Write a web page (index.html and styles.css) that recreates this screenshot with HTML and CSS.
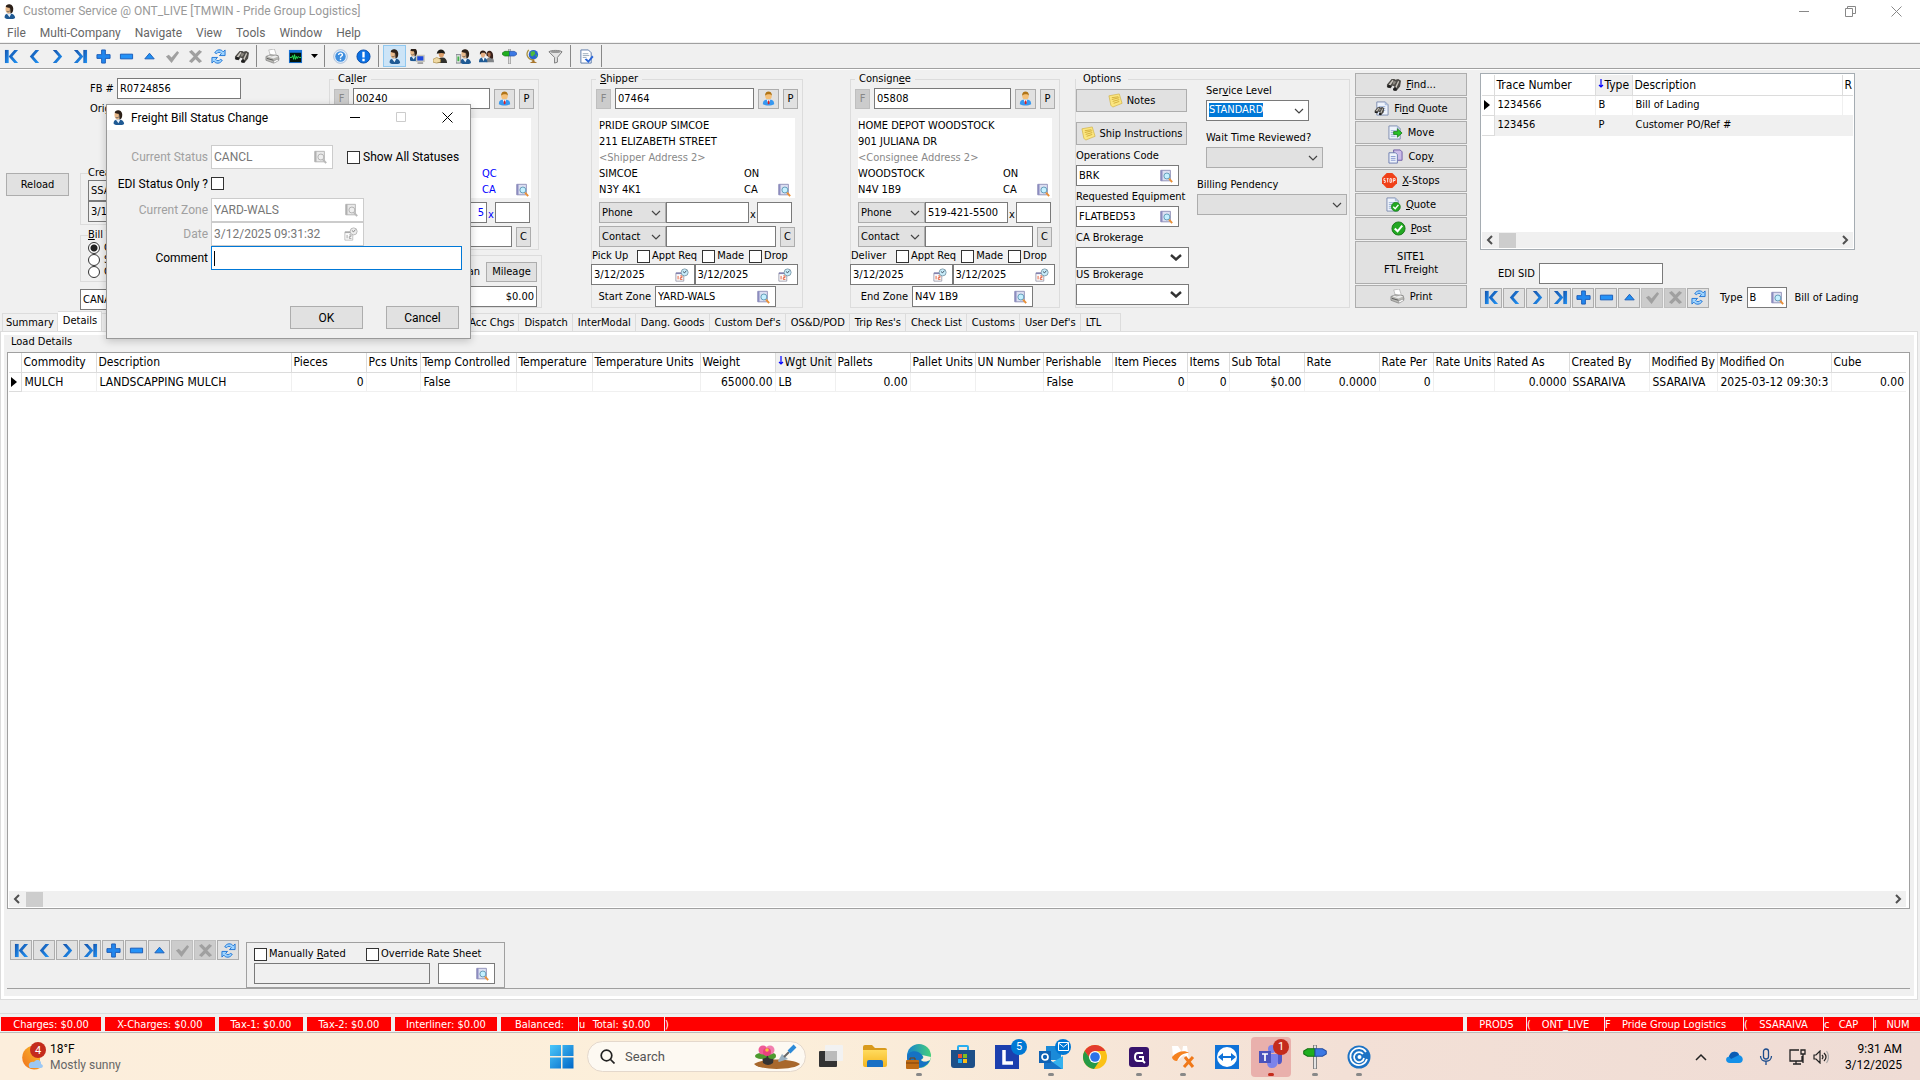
FILE: index.html
```html
<!DOCTYPE html>
<html lang="en">
<head>
  <meta charset="UTF-8">
  <meta name="viewport" content="width=device-width, initial-scale=1.0">
  <title>Customer Service</title>
  <link rel="stylesheet" href="styles.css">
</head>
<body>

  <!-- icons -->
  <svg class="sprite" aria-hidden="true">
    <defs>
      <linearGradient id="blue" x1="0" y1="0" x2="1" y2="1"><stop offset="0" stop-color="#1450a8"/><stop offset="1" stop-color="#2196f8"/></linearGradient>
      <linearGradient id="win" x1="0" y1="0" x2="1" y2="1"><stop offset="0" stop-color="#4cc8fa"/><stop offset="1" stop-color="#0067c8"/></linearGradient>
      <linearGradient id="edge" x1="0" y1="0" x2="1" y2="0"><stop offset="0" stop-color="#1481d0"/><stop offset="1" stop-color="#46d07a"/></linearGradient>
      <linearGradient id="sun" x1="1" y1="0" x2="0" y2="1"><stop offset="0" stop-color="#fbc02d"/><stop offset="1" stop-color="#f0701c"/></linearGradient>
      <linearGradient id="folder" x1="0" y1="0" x2="0" y2="1"><stop offset="0" stop-color="#ffdb5e"/><stop offset="1" stop-color="#f5b51e"/></linearGradient>
    </defs>
    <symbol id="first" viewBox="0 0 16 16"><path d="M1 1h4v14H1z" fill="url(#blue)"/><path d="M11 1h4l-6 7 6 7h-4L5 8z" fill="url(#blue)"/></symbol>
    <symbol id="prev" viewBox="0 0 16 16"><path d="M9 1h4L7 8l6 7H9L3 8z" fill="url(#blue)"/></symbol>
    <symbol id="next" viewBox="0 0 16 16"><path d="M7 1H3l6 7-6 7h4l6-7z" fill="url(#blue)"/></symbol>
    <symbol id="last" viewBox="0 0 16 16"><path d="M11 1h4v14h-4z" fill="url(#blue)"/><path d="M5 1H1l6 7-6 7h4l6-7z" fill="url(#blue)"/></symbol>
    <symbol id="plus" viewBox="0 0 16 16"><path d="M6 1h4v5h5v4h-5v5H6v-5H1V6h5z" fill="#2287ee" stroke="#1a5cb8"/></symbol>
    <symbol id="minus" viewBox="0 0 16 16"><path d="M1.5 5.5h13v5h-13z" fill="#2492f8" stroke="#1a5cb8"/></symbol>
    <symbol id="up" viewBox="0 0 16 16"><path d="M8 4.5l5 6H3z" fill="#2090f4" stroke="#1a5cb8"/></symbol>
    <symbol id="tick" viewBox="0 0 16 16"><path d="M1 8l3-2 3 3 6-7 2 2-8 11z" fill="#a0a0a0"/></symbol>
    <symbol id="cross" viewBox="0 0 16 16"><path d="M1 3l3-2 4 4 4-4 3 2-5 5 5 5-3 2-4-4-4 4-3-2 5-5z" fill="#a0a0a0"/></symbol>
    <symbol id="refresh" viewBox="0 0 16 16"><path d="M4 4C6 0 11 0 13 3l2-2v6H9l2-2C10 3 7 3 6 5zM12 12c-2 4-7 4-9 1l-2 2V9h6l-2 2c1 2 4 2 5 0z" fill="#9ed4ff" stroke="#1f74d4"/></symbol>
    <symbol id="binoc" viewBox="0 0 16 16"><path d="M1 8l5-6 3 0 1 1 3-1 3 2-1 6-4 5-3-1 1-4-2-1-2 3-4-1z" fill="#4c4a46"/><path d="M3 8l4-5 1 1-4 6zM10 10l3-6 1 1-3 7z" fill="#c8c4bc"/><path d="M8 4l3 1-2 3-2 0z" fill="#8c8880"/><ellipse cx="3.5" cy="10" rx="2" ry="1.5" fill="#1e1e1e"/><ellipse cx="9.5" cy="13" rx="2" ry="1.7" fill="#1e1e1e"/></symbol>
    <symbol id="printer" viewBox="0 0 16 16"><path d="M4 1l6-1 2 6-6 2z" fill="#fff" stroke="#aaa" stroke-width=".7"/><path d="M1 8l5-2 8 1 1 4-6 4-8-3z" fill="#b8b8b4" stroke="#777" stroke-width=".7"/><path d="M3 8l6 2 5-2-3-1-4 1-3-1z" fill="#ececec"/><path d="M9 13l4-2 2 1-5 3z" fill="#fff" stroke="#888" stroke-width=".6"/><path d="M2 10l7 2" stroke="#555"/></symbol>
    <symbol id="scope" viewBox="0 0 16 16"><rect x="1" y="1" width="14" height="14" fill="#1a74d8"/><rect x="2" y="4" width="12" height="10" fill="#03140a"/><path d="M2 9h2l1-2 1 4 1-5 1 5 1-3 1 2 1-2 1 1h2" stroke="#2cf060" fill="none"/></symbol>
    <symbol id="help" viewBox="0 0 16 16"><circle cx="8" cy="8" r="7.3" fill="#e4eefa" stroke="#8ca8cc" stroke-width=".7"/><circle cx="8" cy="8" r="5.6" fill="#3f8ede"/><path d="M6 6.5c0-3 4.5-2.5 4 0-.2 1-2 1.200-2 2.700M8 10.500v1.500" stroke="#fff" stroke-width="1.5" fill="none"/></symbol>
    <symbol id="info" viewBox="0 0 16 16"><circle cx="8" cy="8" r="7" fill="#0a70e4" stroke="#0a4eaa"/><path d="M8 3v6M8 10.500V13" stroke="#fff" stroke-width="2.500"/></symbol>
    <symbol id="agent" viewBox="0 0 16 16"><path d="M3 15c-1-4 2-5 5-5 4 0 6 2 6 5-3 2-8 2-11 0z" fill="#1f5a94"/><path d="M5 10l3 4 2-4z" fill="#e8f0f8"/><path d="M4 3c1-2 6-2 6 2 0 3-1 5-3 5S3 8 4 3z" fill="#e9b98a"/><path d="M4 3c0-4 8-4 8 2 0 3-1 5-3 5 0-3 0-4-1-6-1 0-3 0-4-1z" fill="#2c2018"/><path d="M9 5c0 3-2 4-4 3" stroke="#555" stroke-width=".8" fill="none"/></symbol>
    <symbol id="agentpc" viewBox="0 0 16 16"><use href="#agent" x="-3" y="-1" width="14" height="14"/><path d="M7 7h8v6H7z" fill="#1d49e0" stroke="#c6c6bc" stroke-width="1.5"/><path d="M8 15h6" stroke="#888" stroke-width="1.500"/></symbol>
    <symbol id="driver" viewBox="0 0 16 16"><path d="M4 15c0-4 3-6 6-6s5 2 5 6z" fill="#30302c"/><path d="M6 4h6c0 3-1 5-3 5S6 8 6 4z" fill="#dca06c"/><path d="M4 5c1-6 8-6 9 0-3-1-5-1-9 0z" fill="#1c1b18"/><path d="M0 11l4-2 4 2v3l-4 1-4-1z" fill="#efd9a4" stroke="#a88840" stroke-width=".7"/></symbol>
    <symbol id="agentbar" viewBox="0 0 16 16"><use href="#agent" x="2"/><path d="M0 6h5v9H0z" fill="#dfe6df" stroke="#667" stroke-width=".8"/><path d="M1.500 8h2v5h-2z" fill="#44b04c"/></symbol>
    <symbol id="people" viewBox="0 0 16 16"><path d="M8 14c0-4 1-5 4-5s4 2 4 5z" fill="#808488"/><path d="M8 7c-1-7 7-7 7 0v3h-2z" fill="#38201a"/><path d="M9 4h3c1 3 0 5-2 5z" fill="#a86c48"/><path d="M0 14c0-4 2-5 4-5s5 1 5 5z" fill="#1f5a94"/><path d="M3 9l2 4 1-4z" fill="#fff"/><path d="M2 4h5c0 3-1 5-3 5S2 7 2 4z" fill="#e6b084"/><path d="M1 6c-1-6 7-6 7 0L6 4H3z" fill="#2c180e"/></symbol>
    <symbol id="sign" viewBox="0 0 16 16"><path d="M7 0h2v16H7z" fill="#e4e4e4" stroke="#777" stroke-width=".6"/><path d="M3 2.500h5v5H3L.5 6V4z" fill="#1fae1f" stroke="#137013" stroke-width=".7"/><path d="M8 2.500h5L15.500 4v2L13 7.500H8z" fill="#3c78e4" stroke="#264fa0" stroke-width=".7"/></symbol>
    <symbol id="globe" viewBox="0 0 16 16"><path d="M4 1c-4 5-1 10 5 11" stroke="#a89040" stroke-width="1.400" fill="none"/><circle cx="9" cy="6" r="5" fill="#2864d0"/><path d="M6 3l4-1 1 3-3 3-2-1zM11 6l2 0-1 3z" fill="#4cba3c"/><path d="M8 11h2v2l3 2H5l3-2z" fill="#a8762c"/></symbol>
    <symbol id="funnel" viewBox="0 0 16 16"><path d="M1 3c2-2 12-2 14 0L10 9v5l-3 1V9z" fill="#e4e4e4" stroke="#777"/><ellipse cx="8" cy="3" rx="5.5" ry="1.300" fill="#999"/></symbol>
    <symbol id="doccheck" viewBox="0 0 16 16"><path d="M2 1h8l3 3v11H2z" fill="#fff" stroke="#5a78a8"/><path d="M4 5h6M4 7h7M4 9h4" stroke="#9ab"/><path d="M6 11l2-1 2 2 4-5 1.500 1.500L10 15z" fill="#2a66d8"/></symbol>
    <symbol id="lookup" viewBox="0 0 16 16"><path d="M2 1.500h11v12H2z" fill="#dcdff2" stroke="#8c8cb4"/><path d="M2 1.500h2v12H2z" fill="#8c8cc0"/><circle cx="9" cy="8" r="3.400" fill="#c4f0ff" stroke="#5a94b0"/><path d="M11.500 11l3.500 4" stroke="#e89038" stroke-width="2.200"/></symbol>
    <symbol id="when" viewBox="0 0 16 16"><path d="M1 6h9v9H1z" fill="#fff" stroke="#99a"/><path d="M1 5h9v2H1z" fill="#8484b0"/><path d="M3.500 9v4M6 9h2v2H6v2h2.500" stroke="#e0502c" fill="none"/><circle cx="11" cy="5" r="4" fill="#c8ecfa" stroke="#7c98a8"/><path d="M9 4l2 1.500L13 3" stroke="#345" fill="none"/></symbol>
    <symbol id="person" viewBox="0 0 16 16"><path d="M2 14c0-4 2-5 6-5s6 1 6 5c-3 2-9 2-12 0z" fill="#3698f0"/><path d="M6 9h4l-2 5z" fill="#fff"/><path d="M7.500 10h1.200l.6 3-1.300 1.500L7 13z" fill="#e02020"/><circle cx="8" cy="5.500" r="3.400" fill="#f5c078"/><path d="M4.500 5c-1-6 8-6 7 0-1-2-5-2-7 0z" fill="#b07416"/></symbol>
    <symbol id="note" viewBox="0 0 16 16"><path d="M1 3l11-2 3 10-10 4-2-2z" fill="#fbe680" stroke="#d0b040" stroke-width=".7"/><path d="M4 5l7-1M4 7l8-2M5 9l7-2M6 11l6-2" stroke="#c8a028" stroke-width=".8"/></symbol>
    <symbol id="doc" viewBox="0 0 16 16"><path d="M2 1h9l3 3v11H2z" fill="#eef3fb" stroke="#7c8cb0"/><path d="M11 1v3h3M4 6h7M4 8h7M4 10h7M4 12h5" fill="none" stroke="#9ab0d4"/></symbol>
    <symbol id="docfind" viewBox="0 0 16 16"><use href="#doc" x="1"/><use href="#binoc" x="0" y="5" width="11" height="11"/></symbol>
    <symbol id="move" viewBox="0 0 16 16"><use href="#doc" x="-1"/><path d="M6 7h4V4l5 4.500L10 13v-3H6z" fill="#28c428" stroke="#147414" stroke-width=".8"/></symbol>
    <symbol id="copy" viewBox="0 0 16 16"><path d="M6 1h7l2 2v9H6z" fill="#cbbce8" stroke="#6c5ca4"/><path d="M1 4h7l2 2v9H1z" fill="#eef3fb" stroke="#6c7cb0"/><path d="M3 8h5M3 10h5M3 12h5" stroke="#8898d0"/></symbol>
    <symbol id="ok" viewBox="0 0 16 16"><circle cx="8" cy="8" r="7" fill="#22a822" stroke="#187818"/><path d="M4 8l3 3 5-6" stroke="#fff" stroke-width="2.200" fill="none"/></symbol>
    <symbol id="quote" viewBox="0 0 16 16"><use href="#doc" x="-1"/><use href="#ok" x="5" y="5" width="11" height="11"/></symbol>
    <symbol id="stop" viewBox="0 0 16 16"><path d="M5 0h6l5 5v6l-5 5H5l-5-5V5z" fill="#f04018"/><path d="M3.500 6H2v2h1.500v2H2M5 6h2M6 6v4M8.500 6h1.500v4H8.500zM12 10V6h2v2h-2" stroke="#fff" stroke-width=".9" fill="none"/></symbol>
    <symbol id="chev" viewBox="0 0 10 6"><path d="M1 1l4 4 4-4" stroke="#444" stroke-width="1.200" fill="none"/></symbol>
    <symbol id="chevbold" viewBox="0 0 12 7"><path d="M1 1l5 4.500L11 1" stroke="#333" stroke-width="2.400" fill="none"/></symbol>
    <symbol id="sleft" viewBox="0 0 8 10"><path d="M6 1L2 5l4 4" stroke="#505050" stroke-width="2" fill="none"/></symbol>
    <symbol id="sright" viewBox="0 0 8 10"><path d="M2 1l4 4-4 4" stroke="#505050" stroke-width="2" fill="none"/></symbol>
    <symbol id="sort" viewBox="0 0 6 10"><path d="M3 0v8M1 6l2 2 2-2" stroke="#00f" stroke-width="1.200" fill="none"/></symbol>
  </svg>

  <div class="window">

    <header class="titlebar">
      <svg class="ic"><use href="#agent"/></svg>
      <span class="title">Customer Service @ ONT_LIVE [TMWIN - Pride Group Logistics]</span>
      <button class="winbtn" aria-label="Minimize"><svg width="10" height="10"><path d="M0 5.500h10" stroke="#888"/></svg></button>
      <button class="winbtn" aria-label="Restore"><svg width="11" height="11" fill="none" stroke="#888"><path d="M.5 2.500h7v8h-7zM2.500 2.500v-2h8v7h-3"/></svg></button>
      <button class="winbtn" aria-label="Close"><svg width="11" height="11"><path d="M.5.5l10 10M10.500.5l-10 10" stroke="#888"/></svg></button>
    </header>

    <nav class="menu">
      <a href="#">File</a><a href="#">Multi-Company</a><a href="#">Navigate</a><a href="#">View</a><a href="#">Tools</a><a href="#">Window</a><a href="#">Help</a>
    </nav>

    <div class="toolbar">
      <button aria-label="First"><svg class="ic"><use href="#first"/></svg></button>
      <button aria-label="Previous"><svg class="ic"><use href="#prev"/></svg></button>
      <button aria-label="Next"><svg class="ic"><use href="#next"/></svg></button>
      <button aria-label="Last"><svg class="ic"><use href="#last"/></svg></button>
      <button aria-label="Insert"><svg class="ic"><use href="#plus"/></svg></button>
      <button aria-label="Delete"><svg class="ic"><use href="#minus"/></svg></button>
      <button aria-label="Edit"><svg class="ic"><use href="#up"/></svg></button>
      <button aria-label="Save" disabled><svg class="ic"><use href="#tick"/></svg></button>
      <button aria-label="Cancel" disabled><svg class="ic"><use href="#cross"/></svg></button>
      <button aria-label="Refresh"><svg class="ic"><use href="#refresh"/></svg></button>
      <button aria-label="Find"><svg class="ic"><use href="#binoc"/></svg></button>
      <i class="sep"></i>
      <button aria-label="Print"><svg class="ic"><use href="#printer"/></svg></button>
      <button aria-label="Monitor"><svg class="ic"><use href="#scope"/></svg></button>
      <button class="narrow" aria-label="More"><svg width="7" height="4"><path d="M0 0h7L3.500 4z"/></svg></button>
      <i class="sep"></i>
      <button aria-label="Help"><svg class="ic"><use href="#help"/></svg></button>
      <button aria-label="About"><svg class="ic"><use href="#info"/></svg></button>
      <i class="sep"></i>
      <button class="on" aria-label="Customer service"><svg class="ic"><use href="#agent"/></svg></button>
      <button aria-label="Dispatch"><svg class="ic"><use href="#agentpc"/></svg></button>
      <button aria-label="Drivers"><svg class="ic"><use href="#driver"/></svg></button>
      <button aria-label="Billing"><svg class="ic"><use href="#agentbar"/></svg></button>
      <button aria-label="Clients"><svg class="ic"><use href="#people"/></svg></button>
      <button aria-label="Routes"><svg class="ic"><use href="#sign"/></svg></button>
      <button aria-label="Map"><svg class="ic"><use href="#globe"/></svg></button>
      <button aria-label="Filter"><svg class="ic"><use href="#funnel"/></svg></button>
      <i class="sep"></i>
      <button aria-label="Report"><svg class="ic"><use href="#doccheck"/></svg></button>
      <i class="sep"></i>
    </div>

    <section class="top">
      <div class="reload-col"><button class="btn reload">Reload</button></div>

      <div class="bill-col">
        <div class="row fb"><label for="fb">FB #</label><input id="fb" class="box w124" value="R0724856"></div>
        <div class="orig">Original</div>
        <fieldset class="created">
          <legend>Created</legend>
          <input class="box flat" value="SSARAIVA" aria-label="Created by" readonly>
          <input class="box flat" value="3/12/2025" aria-label="Created on" readonly>
        </fieldset>
        <fieldset class="billtype">
          <legend><u>B</u>ill Type</legend>
          <label><input type="radio" name="bt" checked> Customer</label>
          <label><input type="radio" name="bt"> Split</label>
          <label><input type="radio" name="bt"> Other</label>
        </fieldset>
        <input class="box w124" value="CANADIAN" aria-label="Currency">
      </div>

      <div class="caller-col">
        <fieldset class="party">
          <legend>Ca<u>l</u>ler</legend>
          <div class="row">
            <button class="btn sq" disabled>F</button><input class="box grow" value="00240" aria-label="Caller code"><button class="btn pic" aria-label="Caller contact"><svg class="ic"><use href="#person"/></svg></button><button class="btn sq">P</button>
          </div>
          <div class="addr blue">
            <p>&nbsp;</p><p>&nbsp;</p><p>&nbsp;</p>
            <p><span></span><span>QC</span></p>
            <p><span></span><span>CA</span><svg class="ic sm"><use href="#lookup"/></svg></p>
          </div>
          <div class="row line blue">
            <span class="combo w67"><select aria-label="Caller phone type"><option>Phone</option></select><svg><use href="#chev"/></svg></span><input class="box w83 right" value="5" aria-label="Caller phone"><span class="ext">x</span><input class="box w35" aria-label="Caller extension">
          </div>
          <div class="row line">
            <span class="combo w67"><select aria-label="Caller contact type"><option>Contact</option></select><svg><use href="#chev"/></svg></span><input class="box grow" aria-label="Caller contact name"><button class="btn sq">C</button>
          </div>
        </fieldset>
        <fieldset class="miles">
          <div class="row"><span>Plan</span><button class="btn mileage">Mileage</button></div>
          <input class="box right" value="$0.00" aria-label="Amount">
        </fieldset>
      </div>

      <fieldset class="party shipper">
        <legend><u>S</u>hipper</legend>
        <div class="row">
          <button class="btn sq" disabled>F</button><input class="box grow" value="07464" aria-label="Shipper code"><button class="btn pic" aria-label="Shipper contact"><svg class="ic"><use href="#person"/></svg></button><button class="btn sq">P</button>
        </div>
        <div class="addr">
          <p>PRIDE GROUP SIMCOE</p>
          <p>211 ELIZABETH STREET</p>
          <p class="dim">&lt;Shipper Address 2&gt;</p>
          <p><span>SIMCOE</span><span>ON</span></p>
          <p><span>N3Y 4K1</span><span>CA</span><svg class="ic sm"><use href="#lookup"/></svg></p>
        </div>
        <div class="row line">
          <span class="combo w67"><select aria-label="Shipper phone type"><option>Phone</option></select><svg><use href="#chev"/></svg></span><input class="box w83" aria-label="Shipper phone"><span class="ext">x</span><input class="box w35" aria-label="Shipper extension">
        </div>
        <div class="row line">
          <span class="combo w67"><select aria-label="Shipper contact type"><option>Contact</option></select><svg><use href="#chev"/></svg></span><input class="box grow" aria-label="Shipper contact name"><button class="btn sq">C</button>
        </div>
        <div class="row flags">
          <span>Pick Up</span>
          <label><input type="checkbox">Appt Req</label><label><input type="checkbox">Made</label><label><input type="checkbox">Drop</label>
        </div>
        <div class="row dates">
          <span class="field grow"><input value="3/12/2025" aria-label="Pick up from"><svg class="ic sm"><use href="#when"/></svg></span><span class="field grow"><input value="3/12/2025" aria-label="Pick up to"><svg class="ic sm"><use href="#when"/></svg></span>
        </div>
        <div class="row zone"><label for="sz">Start Zone</label><span class="field w121"><input id="sz" value="YARD-WALS"><svg class="ic sm"><use href="#lookup"/></svg></span></div>
      </fieldset>

      <fieldset class="party consignee">
        <legend>Consign<u>e</u>e</legend>
        <div class="row">
          <button class="btn sq" disabled>F</button><input class="box grow" value="05808" aria-label="Consignee code"><button class="btn pic" aria-label="Consignee contact"><svg class="ic"><use href="#person"/></svg></button><button class="btn sq">P</button>
        </div>
        <div class="addr">
          <p>HOME DEPOT WOODSTOCK</p>
          <p>901 JULIANA DR</p>
          <p class="dim">&lt;Consignee Address 2&gt;</p>
          <p><span>WOODSTOCK</span><span>ON</span></p>
          <p><span>N4V 1B9</span><span>CA</span><svg class="ic sm"><use href="#lookup"/></svg></p>
        </div>
        <div class="row line">
          <span class="combo w67"><select aria-label="Consignee phone type"><option>Phone</option></select><svg><use href="#chev"/></svg></span><input class="box w83" value="519-421-5500" aria-label="Consignee phone"><span class="ext">x</span><input class="box w35" aria-label="Consignee extension">
        </div>
        <div class="row line">
          <span class="combo w67"><select aria-label="Consignee contact type"><option>Contact</option></select><svg><use href="#chev"/></svg></span><input class="box grow" aria-label="Consignee contact name"><button class="btn sq">C</button>
        </div>
        <div class="row flags">
          <span>Deliver</span>
          <label><input type="checkbox">Appt Req</label><label><input type="checkbox">Made</label><label><input type="checkbox">Drop</label>
        </div>
        <div class="row dates">
          <span class="field grow"><input value="3/12/2025" aria-label="Deliver from"><svg class="ic sm"><use href="#when"/></svg></span><span class="field grow"><input value="3/12/2025" aria-label="Deliver to"><svg class="ic sm"><use href="#when"/></svg></span>
        </div>
        <div class="row zone"><label for="ez">End Zone</label><span class="field w121"><input id="ez" value="N4V 1B9"><svg class="ic sm"><use href="#lookup"/></svg></span></div>
      </fieldset>

      <fieldset class="options">
        <legend>Options</legend>
        <div class="cols">
          <div class="opt-left">
            <button class="btn wide"><svg class="ic"><use href="#note"/></svg>Notes</button>
            <button class="btn wide second"><svg class="ic"><use href="#note"/></svg>Ship Instructions</button>
            <label for="oc">Operations Code</label>
            <span class="field w103"><input id="oc" value="BRK"><svg class="ic sm"><use href="#lookup"/></svg></span>
            <label for="re">Requested Equipment</label>
            <span class="field w103"><input id="re" value="FLATBED53"><svg class="ic sm"><use href="#lookup"/></svg></span>
            <label for="cab">CA Brokerage</label>
            <span class="combo white bold"><select id="cab"><option></option></select><svg><use href="#chevbold"/></svg></span>
            <label for="usb">US Brokerage</label>
            <span class="combo white bold"><select id="usb"><option></option></select><svg><use href="#chevbold"/></svg></span>
          </div>
          <div class="opt-right">
            <div class="opt ind">
              <label for="sl">Ser<u>v</u>ice Level</label>
              <span class="combo white w103"><span class="picked">STANDARD</span><select id="sl"><option></option></select><svg><use href="#chev"/></svg></span>
            </div>
            <div class="opt ind">
              <label for="wt">Wait Time Reviewed?</label>
              <span class="combo w117"><select id="wt"><option></option></select><svg><use href="#chev"/></svg></span>
            </div>
            <div class="opt">
              <label for="bp">Billing Pendency</label>
              <span class="combo"><select id="bp"><option></option></select><svg><use href="#chev"/></svg></span>
            </div>
          </div>
        </div>
      </fieldset>

      <div class="actions">
        <button class="btn"><svg class="ic"><use href="#binoc"/></svg><span><u>F</u>ind...</span></button>
        <button class="btn"><svg class="ic"><use href="#docfind"/></svg><span>Fi<u>n</u>d Quote</span></button>
        <button class="btn"><svg class="ic"><use href="#move"/></svg><span>Move</span></button>
        <button class="btn"><svg class="ic"><use href="#copy"/></svg><span>Cop<u>y</u></span></button>
        <button class="btn"><svg class="ic"><use href="#stop"/></svg><span><u>X</u>-Stops</span></button>
        <button class="btn"><svg class="ic"><use href="#quote"/></svg><span><u>Q</u>uote</span></button>
        <button class="btn"><svg class="ic"><use href="#ok"/></svg><span><u>P</u>ost</span></button>
        <button class="btn site">SITE1<br>FTL Freight</button>
        <button class="btn"><svg class="ic"><use href="#printer"/></svg><span>Print</span></button>
      </div>

      <div class="trace-col">
        <div class="trace">
          <table class="grid">
            <colgroup><col style="width:12px"><col style="width:101px"><col style="width:37px"><col style="width:210px"><col></colgroup>
            <thead><tr><th></th><th>Trace Number</th><th class="sorted"><svg><use href="#sort"/></svg>Type</th><th>Description</th><th>R</th></tr></thead>
            <tbody>
              <tr><td class="mark"><i></i></td><td>1234566</td><td>B</td><td>Bill of Lading</td><td></td></tr>
              <tr class="alt"><td class="mark"></td><td>123456</td><td>P</td><td>Customer PO/Ref #</td><td></td></tr>
            </tbody>
          </table>
          <div class="hscroll"><svg><use href="#sleft"/></svg><i></i><svg><use href="#sright"/></svg></div>
        </div>
        <div class="row edi"><label for="edi">EDI SID</label><input id="edi" class="box w124"></div>
        <div class="row">
          <div class="navigator">
            <button class="btn" aria-label="First"><svg class="ic"><use href="#first"/></svg></button>
            <button class="btn" aria-label="Previous"><svg class="ic"><use href="#prev"/></svg></button>
            <button class="btn" aria-label="Next"><svg class="ic"><use href="#next"/></svg></button>
            <button class="btn" aria-label="Last"><svg class="ic"><use href="#last"/></svg></button>
            <button class="btn" aria-label="Insert"><svg class="ic"><use href="#plus"/></svg></button>
            <button class="btn" aria-label="Delete"><svg class="ic"><use href="#minus"/></svg></button>
            <button class="btn" aria-label="Edit"><svg class="ic"><use href="#up"/></svg></button>
            <button class="btn" aria-label="Save" disabled><svg class="ic"><use href="#tick"/></svg></button>
            <button class="btn" aria-label="Cancel" disabled><svg class="ic"><use href="#cross"/></svg></button>
            <button class="btn" aria-label="Refresh"><svg class="ic"><use href="#refresh"/></svg></button>
          </div>
          <label class="type" for="tt">Type</label><span class="field w40"><input id="tt" value="B"><svg class="ic sm"><use href="#lookup"/></svg></span><span class="lading">Bill of Lading</span>
        </div>
      </div>
    </section>

    <nav class="tabs">
      <a href="#">Summary</a><a href="#" class="active">Details</a><a href="#" class="hid">Notes</a><a href="#">Acc Chgs</a><a href="#">Dispatch</a><a href="#">InterModal</a><a href="#">Dang. Goods</a><a href="#">Custom Def's</a><a href="#">OS&amp;D/POD</a><a href="#">Trip Res's</a><a href="#">Check List</a><a href="#">Customs</a><a href="#">User Def's</a><a href="#" class="ltl">LTL</a>
    </nav>

    <main class="sheet">
      <div class="page">
        <h2>Load Details</h2>
        <div class="loads">
          <table class="grid">
            <colgroup>
              <col style="width:12px"><col style="width:75px"><col style="width:195px"><col style="width:75px"><col style="width:54px"><col style="width:96px"><col style="width:76px"><col style="width:108px"><col style="width:75px"><col style="width:60px"><col style="width:75px"><col style="width:65px"><col style="width:68px"><col style="width:69px"><col style="width:75px"><col style="width:42px"><col style="width:75px"><col style="width:75px"><col style="width:54px"><col style="width:61px"><col style="width:75px"><col style="width:80px"><col style="width:68px"><col style="width:114px"><col>
            </colgroup>
            <thead>
              <tr><th></th><th>Commodity</th><th>Description</th><th>Pieces</th><th>Pcs Units</th><th>Temp Controlled</th><th>Temperature</th><th>Temperature Units</th><th>Weight</th><th class="sorted"><svg><use href="#sort"/></svg>Wgt Unit</th><th>Pallets</th><th>Pallet Units</th><th>UN Number</th><th>Perishable</th><th>Item Pieces</th><th>Items</th><th>Sub Total</th><th>Rate</th><th>Rate Per</th><th>Rate Units</th><th>Rated As</th><th>Created By</th><th>Modified By</th><th>Modified On</th><th>Cube</th></tr>
            </thead>
            <tbody>
              <tr><td class="mark"><i></i></td><td>MULCH</td><td>LANDSCAPPING MULCH</td><td class="num">0</td><td></td><td>False</td><td></td><td></td><td class="num">65000.00</td><td>LB</td><td class="num">0.00</td><td></td><td></td><td>False</td><td class="num">0</td><td class="num">0</td><td class="num">$0.00</td><td class="num">0.0000</td><td class="num">0</td><td></td><td class="num">0.0000</td><td>SSARAIVA</td><td>SSARAIVA</td><td>2025-03-12 09:30:3</td><td class="num">0.00</td></tr>
            </tbody>
          </table>
          <div class="hscroll"><svg><use href="#sleft"/></svg><i></i><svg><use href="#sright"/></svg></div>
        </div>
        <div class="row below">
          <div class="navigator">
            <button class="btn" aria-label="First"><svg class="ic"><use href="#first"/></svg></button>
            <button class="btn" aria-label="Previous"><svg class="ic"><use href="#prev"/></svg></button>
            <button class="btn" aria-label="Next"><svg class="ic"><use href="#next"/></svg></button>
            <button class="btn" aria-label="Last"><svg class="ic"><use href="#last"/></svg></button>
            <button class="btn" aria-label="Insert"><svg class="ic"><use href="#plus"/></svg></button>
            <button class="btn" aria-label="Delete"><svg class="ic"><use href="#minus"/></svg></button>
            <button class="btn" aria-label="Edit"><svg class="ic"><use href="#up"/></svg></button>
            <button class="btn" aria-label="Save" disabled><svg class="ic"><use href="#tick"/></svg></button>
            <button class="btn" aria-label="Cancel" disabled><svg class="ic"><use href="#cross"/></svg></button>
            <button class="btn" aria-label="Refresh"><svg class="ic"><use href="#refresh"/></svg></button>
          </div>
          <div class="rated">
            <div class="row"><label><input type="checkbox"><span>Manually <u>R</u>ated</span></label><label><input type="checkbox">Override Rate Sheet</label></div>
            <div class="row"><input class="box flat sheetname" aria-label="Rate sheet" readonly><span class="field w57"><input aria-label="Rate sheet code"><svg class="ic sm"><use href="#lookup"/></svg></span></div>
          </div>
        </div>
      </div>
    </main>

    <footer class="status">
      <span style="width:100px">Charges: $0.00</span>
      <span style="width:110px">X-Charges: $0.00</span>
      <span style="width:84px">Tax-1: $0.00</span>
      <span style="width:84px">Tax-2: $0.00</span>
      <span style="width:102px">Interliner: $0.00</span>
      <span class="joined" style="width:77px">Balanced:</span>
      <span class="joined cut" style="width:85px"><i>u</i>Total: $0.00</span>
      <span class="cut fill"><i>)</i></span>
      <span class="joined" style="width:59px">PROD5</span>
      <span class="joined cut" style="width:77px"><i>(</i>ONT_LIVE</span>
      <span class="joined cut" style="width:138px"><i>F</i>Pride Group Logistics</span>
      <span class="joined cut" style="width:79px"><i>(</i>SSARAIVA</span>
      <span class="joined cut" style="width:49px"><i>c</i>CAP</span>
      <span class="joined cut" style="width:48px"><i>l</i>NUM</span>
    </footer>
  </div>

  <!-- status change dialog -->
  <div class="dialog" role="dialog" aria-labelledby="dlg-title">
    <div class="dlg-bar">
      <svg class="ic"><use href="#agent"/></svg>
      <span id="dlg-title">Freight Bill Status Change</span>
      <button class="winbtn" aria-label="Minimize dialog"><svg width="10" height="11"><path d="M0 5.500h10" stroke="#000"/></svg></button>
      <button class="winbtn" aria-label="Maximize dialog" disabled><svg width="10" height="11" fill="none"><path d="M.5.5h9v9h-9z" stroke="#ccc"/></svg></button>
      <button class="winbtn" aria-label="Close dialog"><svg width="11" height="11"><path d="M.5.5l10 10M10.500.5l-10 10" stroke="#000"/></svg></button>
    </div>
    <div class="dlg-body">
      <div class="dlg-row off"><label for="cs">Current Status</label><span class="field w122"><input id="cs" value="CANCL" disabled><svg class="ic sm"><use href="#lookup"/></svg></span><label class="check"><input type="checkbox">Show All Statuses</label></div>
      <div class="dlg-row edionly"><label for="eo">EDI Status Only ?</label><input id="eo" type="checkbox"></div>
      <div class="dlg-row off"><label for="cz">Current Zone</label><span class="field w153"><input id="cz" value="YARD-WALS" disabled><svg class="ic sm"><use href="#lookup"/></svg></span></div>
      <div class="dlg-row off"><label for="dt">Date</label><span class="field w153"><input id="dt" value="3/12/2025 09:31:32" disabled><svg class="ic sm"><use href="#when"/></svg></span></div>
      <div class="dlg-row"><label for="cm">Comment</label><span class="field focus w251"><i class="caret"></i><input id="cm"></span></div>
      <div class="dlg-buttons"><button class="btn">OK</button><button class="btn">Cancel</button></div>
    </div>
  </div>

  <div class="taskbar">
    <div class="weather">
      <svg width="28" height="34"><path d="M20 7A12 12 0 1 0 20 28z" fill="url(#sun)"/><path d="M10 28c-3-3 0-7 4-6 3-4 8-1 7 2 3 1 2 4 0 4z" fill="#9cc8f4"/><circle cx="18" cy="10" r="8" fill="#c42b1c"/><text x="15" y="14" font-size="11" fill="#fff">4</text></svg>
      <div><p>18°F</p><p class="soft">Mostly sunny</p></div>
    </div>
    <div class="apps">
      <button class="start" aria-label="Start"><svg width="24" height="24" fill="url(#win)"><path d="M0 0h11v11H0zM12.500 0h11v11h-11zM0 12.500h11v11H0zM12.500 12.500h11v11h-11z"/></svg></button>
      <div class="search">
        <svg width="15" height="15" fill="none" stroke="#222" stroke-width="1.700"><circle cx="6.500" cy="6.500" r="5.300"/><path d="M10.500 10.500l4 4"/></svg>
        <input placeholder="Search" aria-label="Search">
        <svg width="48" height="26"><path d="M1 20c8-6 38-6 46 0-4 6-40 7-46 0z" fill="#a8682c"/><path d="M9 11h12l-1 8q-5 4-10 0z" fill="#333"/><ellipse cx="8" cy="12" rx="6" ry="3" fill="#4d9a2e"/><ellipse cx="19" cy="12" rx="4" ry="3" fill="#4d9a2e"/><circle cx="10" cy="6" r="4.500" fill="#f05a96"/><circle cx="17" cy="6" r="4.500" fill="#f27fae"/><circle cx="14" cy="8" r="4" fill="#e8417f"/><circle cx="14" cy="6" r="1.800" fill="#f8c040"/><path d="M25 17l4-7 6 5-9 3z" fill="#9ab0c0"/><path d="M31 13l5-5" stroke="#666" stroke-width="2"/><path d="M36 8l6-6" stroke="#2c8ad8" stroke-width="4"/></svg>
      </div>
      <button aria-label="Task view"><svg width="24" height="24"><rect y="6" width="18" height="16" rx="1" fill="#333"/><rect x="6" width="18" height="16" rx="1" fill="#f2f2f2"/><rect x="6" y="6" width="12" height="10" fill="#bbb"/></svg></button>
      <button aria-label="Files"><svg width="24" height="24"><path d="M0 2q0-2 2-2h7l3 3h10q2 0 2 2v4H0z" fill="#d99a1c"/><path d="M0 5h24v15q0 2-2 2H2q-2 0-2-2z" fill="url(#folder)"/><path d="M4 22v-5q0-2 2-2h12q2 0 2 2v5z" fill="#1a70c4"/></svg></button>
      <button class="run" aria-label="Edge"><svg width="26" height="26"><circle cx="13" cy="12" r="12" fill="url(#edge)"/><path d="M1 14C1 6 12 5 16 11c2 3 0 4-1 5 3 3 7 1 9 0-3 7-11 9-16 7C4 22 1 18 1 14z" fill="#1672c4"/><path d="M16 11c3 3 0 4-1 5 3 3 7 1 9 0l1-3z" fill="#fbeedd"/><rect y="16" width="13" height="9" rx="1" fill="#c06c14"/><path d="M4 16v-2h5v2M0 19h13" stroke="#7a3e08" fill="none"/></svg></button>
      <button aria-label="Store"><svg width="24" height="24"><path d="M7 6V2q0-1 1-1h8q1 0 1 1v4" stroke="#28aef0" stroke-width="2" fill="none"/><path d="M0 5h24v15q0 3-3 3H3q-3 0-3-3z" fill="#1d4f88"/><path d="M7 9h4v4H7z" fill="#f05030"/><path d="M12 9h4v4h-4z" fill="#80bc20"/><path d="M7 14h4v4H7z" fill="#20a8f0"/><path d="M12 14h4v4h-4z" fill="#fcbc14"/></svg></button>
      <button aria-label="L"><svg width="24" height="24"><rect width="24" height="24" fill="#1c3fae"/><path d="M9 5v13h9" stroke="#fff" stroke-width="3.500" fill="none"/></svg><b class="badge">5</b></button>
      <button class="run" aria-label="Outlook"><svg width="24" height="24"><rect x="7" y="1" width="15" height="14" fill="#1b8ad8"/><path d="M5 11l9 6 10-6v13H5z" fill="#35b1ee"/><path d="M5 11l18 13H5z" fill="#1774c8"/><rect y="6" width="12" height="12" fill="#0f62b4"/><circle cx="6" cy="12" r="3" stroke="#fff" stroke-width="1.700" fill="none"/></svg><b class="badge"><svg width="11" height="9" fill="none" stroke="#fff"><path d="M.5.5h10v8H.5zM.5 1l5 4 5-4"/></svg></b></button>
      <button aria-label="Chrome"><svg width="24" height="24"><circle cx="12" cy="12" r="12" fill="#fbc116"/><path d="M1.600 6A12 12 0 0 1 22.400 6H12L8 15z" fill="#e33b2e"/><path d="M1.600 6A12 12 0 0 0 11 24l6-9-8 1z" fill="#269a46"/><circle cx="12" cy="12" r="6" fill="#fff"/><circle cx="12" cy="12" r="4.800" fill="#2b72e8"/></svg></button>
      <button class="run" aria-label="G"><svg width="20" height="20"><rect width="20" height="20" rx="3" fill="#37136c"/><path d="M14 6H9Q6 6 6 10t3 4h5v-4h-4M14 14l2 2" stroke="#fff" stroke-width="2" fill="none"/></svg></button>
      <button class="run" aria-label="X"><svg width="24" height="24"><path d="M1 1l6 0 4 6 1-6h4l2 14-5-5-6 5-5-3z" fill="#fff"/><path d="M1 12c5-6 13-7 17-4-6 0-9 2-12 8-3 0-5-2-5-4z" fill="#f58220"/><path d="M14 12l8 10M22 12l-9 10" stroke="#f07818" stroke-width="3"/></svg></button>
      <button aria-label="Remote"><svg width="24" height="24"><rect width="24" height="24" fill="#0f72d8"/><circle cx="12" cy="12" r="10" fill="#fff"/><path d="M3 12l5-4v3h8V8l5 4-5 4v-3H8v3z" fill="#0f72d8"/></svg></button>
      <button class="run alert" aria-label="Teams"><svg width="24" height="24"><circle cx="13" cy="4" r="4" fill="#7b83eb"/><path d="M8 9h11v8q-1 6-6 6t-5-6z" fill="#7b83eb"/><path d="M19 9h4v7q-1 4-4 3z" fill="#5059c9"/><rect y="6" width="12" height="12" fill="#4b53bc"/><path d="M3 9h6M6 9v7" stroke="#fff" stroke-width="1.700"/></svg><b class="badge red">1</b></button>
      <button class="run" aria-label="Routes"><svg width="24" height="24"><use href="#sign"/></svg></button>
      <button class="run" aria-label="Workspace"><svg width="24" height="24"><circle cx="12" cy="12" r="11.500" fill="#1c72c4"/><path d="M19 7A8.500 8.500 0 1 0 20 14M16 9a5 5 0 1 0 1 4" stroke="#fff" stroke-width="1.700" fill="none"/><circle cx="12.500" cy="12" r="2" fill="#fff"/></svg></button>
    </div>
    <div class="tray">
      <svg width="12" height="8"><path d="M1 7l5-5 5 5" stroke="#222" stroke-width="1.500" fill="none"/></svg>
      <svg width="17" height="12"><path d="M4 12C-1 12-1 6 3 5.500 5-1 12 0 13 4c5 1 5 8 0 8z" fill="#1490e8"/><path d="M3 5.500C5-1 12 0 13 4L5 8z" fill="#0a5cb4"/></svg>
      <svg width="14" height="17" fill="none" stroke="#1c4c8c" stroke-width="1.300"><rect x="4.500" y="1" width="5" height="10" rx="2.500"/><path d="M1.500 8c0 7 11 7 11 0M7 13.500V17"/></svg>
      <svg width="17" height="17" fill="none" stroke="#222" stroke-width="1.300"><path d="M10 2H1v11h12V8M4 16h8M7 13v3M12 2h4v4h-4zM14 6v9"/></svg>
      <svg width="16" height="14" fill="none" stroke="#222" stroke-width="1.200"><path d="M1 5h2l4-4v12L3 9H1zM9 5q2 2 0 4M11 3q4 4 0 8"/><path d="M13.500 1q4 6 0 12" stroke="#aaa"/></svg>
      <div class="clock"><p>9:31 AM</p><p>3/12/2025</p></div>
    </div>
  </div>

</body>
</html>
```

FILE: styles.css
```css
* {
  box-sizing: border-box;
}

body {
  margin: 0;
  height: 100vh;
  display: flex;
  flex-direction: column;
  background: #f0f0f0;
  color: #000;
  font-family: "DejaVu Sans Condensed", "DejaVu Sans", sans-serif;
  font-size: 11px;
  line-height: 14px;
  position: relative;
  overflow: hidden;
}

p, h2 { margin: 0; font-size: inherit; font-weight: normal; }
i { font-style: normal; }
a { color: inherit; text-decoration: none; }
button, input, select { font: inherit; color: inherit; margin: 0; padding: 0; border-radius: 0; }
button { border: 0; background: none; }
label, span, th, td, p, a { white-space: nowrap; }

.sprite { position: absolute; width: 0; height: 0; }
.ic { width: 15px; height: 15px; flex: none; }
.sm { width: 14px; height: 14px; }

.window {
  flex: 1;
  display: flex;
  flex-direction: column;
  min-height: 0;
}

/* title, menu, toolbar */
.titlebar {
  background: #fff;
  height: 22px;
  display: flex;
  align-items: center;
  padding: 0 1px 0 2px;
  color: #999;
  font-family: Roboto, sans-serif;
  font-size: 12px;
}
.titlebar .title { flex: 1; margin-left: 6px; }
.winbtn { width: 46px; display: flex; justify-content: center; }

.menu {
  background: #fff;
  height: 20px;
  padding: 3px 7px 0;
  display: flex;
  gap: 14px;
  color: #666;
  font-family: Roboto, sans-serif;
  font-size: 12px;
  line-height: 16px;
}

.toolbar {
  height: 26px;
  border-top: 1px solid #a0a0a0;
  border-bottom: 1px solid #a0a0a0;
  margin-top: 1px;
  display: flex;
  align-items: center;
}
.toolbar button {
  width: 23px;
  height: 22px;
  display: flex;
  align-items: center;
  justify-content: center;
}
.toolbar .narrow { width: 14px; }
.toolbar .on { background: #cce4f7; border: 1px solid #90c8f0; }
.sep { width: 1px; height: 22px; background: #888; margin: 0 4px 0 3px; }

/* shared controls */
.row { display: flex; align-items: center; }
.grow { flex: 1; min-width: 0; }
.btn {
  background: #e1e1e1;
  border: 1px solid #adadad;
  display: flex;
  align-items: center;
  justify-content: center;
}
.btn:disabled { background: #ccc; color: #888; border-color: #bfbfbf; }
.box, .field {
  height: 21px;
  border: 1px solid #7a7a7a;
  background: #fff;
  padding: 0 2px;
}
.field { display: flex; align-items: center; }
.field input { border: 0; background: none; flex: 1; width: 20px; outline: none; }
.field .ic { margin-right: 3px; }
.flat { background: #f0f0f0; }
.right { text-align: right; }
.combo {
  position: relative;
  display: block;
  height: 21px;
  background: #e1e1e1;
  border: 1px solid #adadad;
}
.combo select {
  appearance: none;
  width: 100%;
  height: 100%;
  border: 0;
  background: none;
  padding-left: 2px;
}
.combo svg { position: absolute; right: 4px; top: 7px; width: 10px; height: 6px; pointer-events: none; }
.combo.white { background: #fff; border-color: #7a7a7a; }
.combo.bold svg { right: 6px; top: 6px; width: 12px; height: 7px; }
.picked { position: absolute; left: 2px; top: 2px; background: #0078d7; color: #fff; }

.w35 { width: 35px; }
.w40 { width: 40px; }
.w57 { width: 57px; }
.w67 { width: 67px; }
.w83 { width: 83px; }
.w103 { width: 103px; }
.w117 { width: 117px; }
.w121 { width: 121px; }
.w122 { width: 122px; }
.w124 { width: 124px; }
.w153 { width: 153px; }
.w251 { width: 251px; }

input[type="checkbox"] {
  appearance: none;
  flex: none;
  width: 13px;
  height: 13px;
  border: 1px solid #333;
  background: #fff;
}
input[type="radio"] {
  appearance: none;
  flex: none;
  width: 12px;
  height: 12px;
  border: 1px solid #333;
  border-radius: 50%;
  background: #fff;
}
input[type="radio"]:checked { background: radial-gradient(#222 0 3px, #fff 4px); }

fieldset { border: 1px solid #dcdcdc; margin: 0; padding: 0; min-width: 0; }
legend { padding: 0 7px; margin: 0; }

/* upper panel */
.top {
  display: flex;
  align-items: flex-start;
  border-top: 1px solid #fff;
  padding-top: 3px;
  height: 242px;
}
.reload-col { width: 80px; padding: 100px 0 0 6px; }
.reload { width: 63px; height: 23px; }
.bill-col { width: 249px; padding-top: 5px; }
.fb { gap: 3px; padding-left: 10px; }
.orig { padding: 3px 0 0 10px; }
.created { margin-top: 50px; padding: 0 7px 2px; }
.created legend, .billtype legend { padding: 0; }
.created .box { display: block; width: 124px; }
.billtype { margin-top: 3px; padding: 0 0 3px 7px; }
.billtype label { display: flex; align-items: center; gap: 4px; height: 12px; }
.bill-col > .box { margin-top: 7px; }

.caller-col { width: 213px; margin-top: -1px; }
.caller-col .party { width: 210px; padding-bottom: 2px; }
.miles { margin-top: 5px; height: 53px; padding: 6px 4px 0; }
.miles .row { justify-content: flex-end; gap: 6px; }
.miles .mileage { width: 51px; height: 20px; }
.miles .box { width: 100%; margin-top: 4px; }

.party { padding: 2px 4px 0; width: 210px; }
.party legend { padding: 0 4px; }
.party > .row:nth-of-type(1) { gap: 4px; }
.sq { width: 15px; height: 20px; }
.pic { width: 21px; height: 20px; }
.addr { background: #fff; height: 80px; margin: 9px 3px 0; line-height: 16px; }
.addr p { display: flex; height: 16px; }
.addr p span { width: 145px; }
.addr p span + span { width: 33px; }
.addr .sm { margin-top: 1px; }
.dim { color: #888; }
.blue { color: #00f; }
.line { margin: 3px 3px 0; }
.line .sq { margin-left: 4px; }
.addr + .line { margin-top: 4px; }
.ext { width: 8px; text-align: center; padding-top: 5px; }
.flags { margin: 2px 0 0 -4px; height: 14px; }
.flags > span { width: 45px; }
.flags label { display: flex; align-items: center; gap: 2px; margin-right: 5px; }
.dates { margin: 1px 0 0 -5px; }
.zone { margin-top: 1px; justify-content: flex-end; gap: 4px; padding-right: 22px; }
.shipper { margin: -1px 0 0 49px; width: 212px; }
.consignee { margin: -1px 0 0 47px; width: 210px; }

.options { margin: -1px 0 0 15px; width: 275px; height: 236px; }
.cols { display: flex; padding-top: 3px; }
.opt-left { width: 113px; }
.opt-left > * { display: flex; }
.opt-left label { height: 14px; margin: 4px 0 2px; }
.opt-left .combo + label { margin-top: 0; }
.wide { width: 111px; height: 23px; gap: 4px; }
.wide.second { margin-top: 10px; }
.opt-right { flex: 1; margin: -5px 0 0 8px; padding: 0 2px 0 0; }
.opt { margin-bottom: 10px; }
.opt label { display: block; margin-bottom: 2px; }
.opt.ind { padding-left: 9px; }

.actions { width: 112px; margin-left: 5px; display: flex; flex-direction: column; gap: 1px; }
.actions .btn { height: 23px; gap: 5px; }
.actions .site { height: 43px; line-height: 13px; }

.trace-col { width: 375px; margin-left: 13px; }
.trace {
  background: #fff;
  border: 1px solid #a5acb2;
  height: 177px;
  padding: 1px;
  display: flex;
  flex-direction: column;
}
.trace th { font-size: 12px; }
.edi { margin: 13px 0 3px 18px; gap: 4px; }
.navigator { display: flex; gap: 1px; }
.navigator .btn { width: 22px; height: 20px; }
.type { margin: 0 4px 0 11px; }
.lading { margin-left: 8px; }

/* data grids */
.grid { border-collapse: collapse; table-layout: fixed; width: 100%; }
.grid th, .grid td {
  text-align: left;
  font-weight: normal;
  padding: 0 0 0 2px;
  height: 20px;
  overflow: hidden;
  border-right: 1px solid #f0f0f0;
  border-bottom: 1px solid #f0f0f0;
}
.grid th { border-color: #dcdcdc; }
.grid td { padding-left: 3px; }
.grid th:last-child, .grid td:last-child { border-right: 0; }
.grid .sorted { background: #f0f0f0; }
.grid .sorted svg { width: 6px; height: 10px; margin-right: 1px; }
.grid .num { text-align: right; padding-right: 2px; }
.grid .mark { padding-left: 2px; border-color: #dcdcdc; }
.mark i { display: block; border: 5px solid transparent; border-left: 6px solid #000; border-right: 0; }
.alt td { background: #f0f0f0; }
.alt .mark { background: #fff; }
.hscroll { margin-top: auto; height: 16px; background: #f0f0f0; display: flex; align-items: center; padding: 0 4px; }
.hscroll svg { width: 8px; height: 10px; }
.hscroll i { width: 17px; height: 15px; background: #cdcdcd; margin: 0 auto 0 5px; }

/* tabs */
.tabs { display: flex; align-items: flex-end; height: 20px; padding-left: 2px; }
.tabs a {
  height: 18px;
  padding: 2px 4px 0 5px;
  border: 1px solid #dcdcdc;
  border-left: 0;
  border-bottom: 0;
}
.tabs a:first-child { border-left: 1px solid #dcdcdc; padding: 2px 3px 0; }
.tabs .active { height: 20px; background: #fff; }
.tabs .hid { width: 362px; }
.tabs .ltl { width: 40px; }

.sheet {
  flex: 1;
  display: flex;
  min-height: 0;
  margin-right: 2px;
  padding: 3px;
  border: 1px solid #dcdcdc;
  box-shadow: inset 0 0 0 3px #fff;
}
.page {
  flex: 1;
  min-width: 0;
  display: flex;
  flex-direction: column;
  padding: 0 4px 7px 3px;
}
.page h2 { padding-left: 4px; }
.loads {
  flex: 1;
  background: #fff;
  border: 1px solid #a0a0a0;
  display: flex;
  flex-direction: column;
  margin-top: 3px;
  padding: 0 3px 1px 1px;
  font-size: 12px;
}
.loads th, .loads td { height: 19px; }
.below {
  height: 80px;
  padding: 31px 0 0 3px;
  gap: 7px;
  align-items: flex-start;
  border-bottom: 1px solid #a0a0a0;
}
.rated { border: 1px solid #a0a0a0; padding: 4px 7px 3px; width: 259px; margin-top: 2px; }
.rated label { display: flex; align-items: center; gap: 2px; width: 112px; }
.rated .row + .row { margin-top: 2px; gap: 8px; }
.sheetname { width: 176px; }

/* red status strip */
.status {
  height: 20px;
  margin-top: 13px;
  padding: 3px 1px 1px;
  border-top: 1px solid #dcdcdc;
  border-bottom: 1px solid #bbb;
  display: flex;
  gap: 4px;
}
.status span {
  background: #f00;
  color: #fff;
  text-align: center;
  position: relative;
  line-height: 15px;
}
.status .joined { margin-right: -3px; }
.status .cut i { position: absolute; left: 0; top: 0; }
.status .fill { flex: 1; }

/* dialog */
.dialog {
  position: absolute;
  left: 106px;
  top: 104px;
  width: 365px;
  height: 235px;
  background: #f0f0f0;
  border: 1px solid #999;
  box-shadow: 0 2px 8px rgba(0, 0, 0, 0.2);
}
.dlg-bar {
  background: #fff;
  height: 25px;
  display: flex;
  align-items: center;
  padding-left: 4px;
  font-family: Roboto, sans-serif;
  font-size: 12px;
}
.dlg-bar span { flex: 1; margin-left: 5px; }
.dlg-body { padding: 15px 0 0; font-family: Roboto, sans-serif; font-size: 12px; }
.dlg-row { display: flex; align-items: center; gap: 3px; }
.dlg-row > label:first-child { width: 101px; text-align: right; }
.dlg-row .field { height: 24px; }
.off > label:first-child, .off .field { color: #a0a0a0; }
.off .field { border-color: #ccc; }
.off .field input { color: #777; }
.off .ic { filter: grayscale(1); opacity: 0.7; }
.check { display: flex; align-items: center; gap: 3px; margin-left: 11px; }
.edionly { height: 29px; }
.dlg-row .focus { border-color: #0078d7; }
.caret { width: 1px; height: 15px; background: #000; }
.dlg-buttons { display: flex; justify-content: flex-end; gap: 23px; padding: 36px 11px 0 0; }
.dlg-buttons .btn { width: 73px; height: 23px; }

/* taskbar */
.taskbar {
  height: 47px;
  display: flex;
  align-items: center;
  background: linear-gradient(90deg, #fceedc, #fcefda 40%, #f3e0d6 70%, #efdcd5);
  font-family: Roboto, sans-serif;
  font-size: 12px;
  line-height: 16px;
}
.taskbar p { line-height: 16px; }
.weather { display: flex; align-items: center; gap: 2px; width: 540px; padding-left: 20px; }
.soft { color: #666; }
.apps { display: flex; align-items: center; }
.apps button { position: relative; width: 44px; height: 40px; display: flex; align-items: center; justify-content: center; }
.apps .run::after {
  content: "";
  position: absolute;
  bottom: 1px;
  left: 19px;
  width: 6px;
  height: 3px;
  border-radius: 2px;
  background: #888;
}
.apps .alert { background: #e9b0ac; border-radius: 4px; width: 40px; margin: 0 2px; }
.apps .alert::after { background: #c42b1c; left: 17px; }
.search {
  width: 219px;
  height: 31px;
  margin: 0 3px;
  padding: 0 4px 0 12px;
  border: 1px solid #e4d8cc;
  border-radius: 16px;
  background: #fdf9f2;
  display: flex;
  align-items: center;
}
.search input { flex: 1; width: 40px; border: 0; background: none; margin-left: 10px; font-size: 13px; }
.search input::placeholder { color: #555; }
.badge {
  position: absolute;
  right: 2px;
  top: 2px;
  width: 16px;
  height: 16px;
  border-radius: 50%;
  background: #0078d4;
  color: #fff;
  display: flex;
  align-items: center;
  justify-content: center;
  font-size: 11px;
  font-weight: normal;
}
.badge.red { background: #c42b1c; }
.tray { margin-left: auto; display: flex; align-items: center; gap: 16px; padding-right: 18px; }
.tray svg:first-child { margin-right: 3px; }
.tray svg:nth-of-type(5) { margin-left: -9px; }
.clock { text-align: right; }
```
